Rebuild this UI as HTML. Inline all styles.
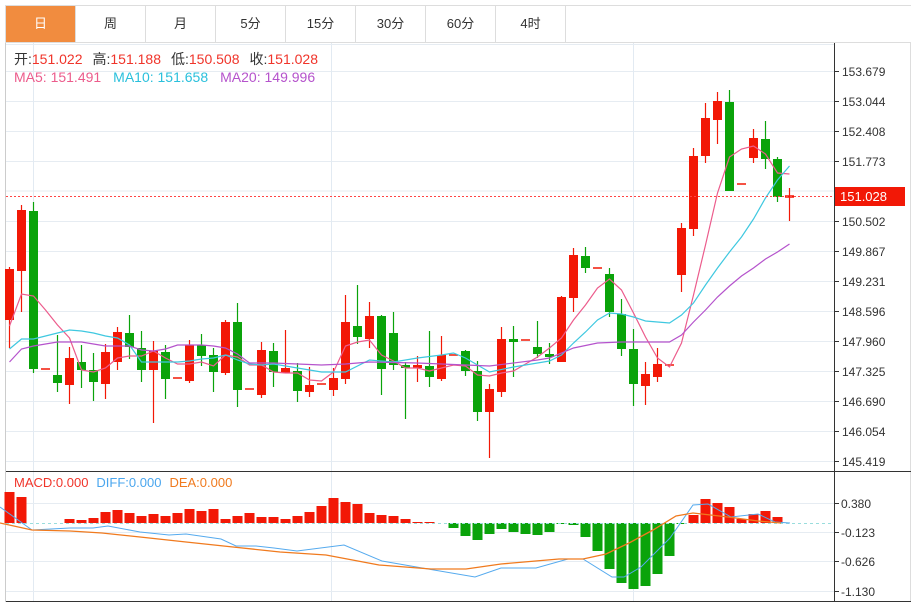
<!DOCTYPE html>
<html><head><meta charset="utf-8"><style>
body{margin:0;background:#fff;width:911px;height:604px;overflow:hidden;font-family:"Liberation Sans","Noto Sans CJK SC",sans-serif;}
.tabs{position:absolute;left:5px;top:5px;height:38px;display:flex;border:1px solid #ddd;border-right:none;box-sizing:border-box;width:906px}
.tab{width:70px;height:36px;line-height:36px;text-align:center;font-size:13px;color:#333;border-right:1px solid #ddd;box-sizing:border-box}
.tab.on{background:#f18c3f;color:#fff}
svg{position:absolute;left:0;top:0}
</style></head><body>
<div class="tabs"><div class="tab on">日</div><div class="tab">周</div><div class="tab">月</div><div class="tab">5分</div><div class="tab">15分</div><div class="tab">30分</div><div class="tab">60分</div><div class="tab">4时</div></div>
<svg id="s" width="911" height="604" style="top:0" xmlns="http://www.w3.org/2000/svg" font-family="Liberation Sans, Noto Sans CJK SC, sans-serif"></svg>
<script>
var s=document.getElementById('s'),h='';
function L(x1,y1,x2,y2,c,w,d){h+='<line x1="'+x1+'" y1="'+y1+'" x2="'+x2+'" y2="'+y2+'" stroke="'+c+'" stroke-width="'+(w||1)+'"'+(d?' stroke-dasharray="'+d+'"':'')+'/>';}
function T(x,y,t,c,fs){h+='<text x="'+x+'" y="'+y+'" fill="'+c+'" font-size="'+(fs||12)+'">'+t+'</text>';}
L(5.5,43,5.5,602,'#ccc');L(910.5,43,910.5,602,'#ddd');
var labs=[[71,'153.679'],[101,'153.044'],[131,'152.408'],[161,'151.773'],[221,'150.502'],[251,'149.867'],[281,'149.231'],[311,'148.596'],[341,'147.960'],[371,'147.325'],[401,'146.690'],[431,'146.054'],[461,'145.419']];
L(6,191,834,191,'#e6ecf2');
labs.forEach(function(a){L(6,a[0]+.5,834,a[0]+.5,'#e6ecf2');L(834,a[0]+.5,839,a[0]+.5,'#333');T(842,a[0]+5,a[1],'#333',12);});
[33.5,331.5,633.5].forEach(function(x){L(x,43,x,602,'#e2eaf2');});
[[503,'0.380'],[532,'-0.123'],[561,'-0.626'],[591,'-1.130']].forEach(function(a){L(6,a[0]+.5,834,a[0]+.5,'#e6ecf2');L(834,a[0]+.5,839,a[0]+.5,'#333');T(841,a[0]+5,a[1],'#333',12);});
h+='<rect x="6" y="44" width="828" height="1" fill="#e6ecf2"/>';
var C=[[269,320,267,348],[210,271,205,312],[211,369,202,373,1],[369,369,369,369],[375,383,335,392,1],[358,385,347,404],[362,370,345,388,1],[370,382,353,401,1],[352,384,344,399],[332,362,327,370],[333,347,315,359,1],[348,370,331,382,1],[351,370,341,423],[352,379,345,399,1],[378,378,378,378],[345,381,340,383],[345,356,334,366,1],[355,372,348,392,1],[322,373,320,375],[322,390,303,407,1],[389,389,389,389],[350,395,342,398],[351,372,343,387,1],[368,373,330,373],[371,391,363,402,1],[385,392,367,397],[384,384,384,384],[378,390,368,396],[322,379,295,384],[326,337,285,344,1],[316,339,302,348],[316,369,315,395,1],[333,365,312,370,1],[365,368,362,419,1],[365,368,356,382],[366,377,331,387,1],[355,379,336,381],[355,355,355,355],[351,371,350,376,1],[371,412,361,421,1],[389,412,384,458],[339,392,327,397],[339,342,326,377,1],[340,340,340,340],[347,354,321,358,1],[354,357,343,364,1],[297,362,296,362],[255,298,248,312],[256,268,247,273,1],[268,268,268,268],[274,312,268,317,1],[314,349,299,356,1],[349,384,329,406,1],[374,386,362,405],[364,377,348,382],[365,365,365,365],[228,275,223,292],[156,229,148,236],[118,156,103,163],[101,120,92,144],[102,191,90,191,1],[184,184,184,184],[138,158,129,163],[139,159,121,169,1],[159,197,157,202,1],[196,197,188,221]];
C.forEach(function(c,i){var x=9.5+12*i,col=c[4]?'#0aa30a':'#f21806';
 L(x,c[2],x,c[3],col,1.2);var t=Math.min(c[0],c[1]),b=Math.max(c[0],c[1]);if(b-t<1.5){t-=.75;b+=.75}
 h+='<rect x="'+(x-4.5)+'" y="'+t+'" width="9" height="'+(b-t)+'" fill="'+col+'"/>';});
function P(pts,c,w){h+='<polyline fill="none" stroke="'+c+'" stroke-width="'+(w||1.2)+'" points="'+pts+'"/>';}
P('9.5,326 21.5,294 33.5,296 45.5,310 57.5,325 69.5,338 81.5,370 93.5,372 105.5,368 117.5,358 129.5,356 141.5,356 153.5,351 165.5,358 177.5,364 189.5,364 201.5,362 213.5,366 225.5,355 237.5,357 249.5,365 261.5,365 273.5,372 285.5,373 297.5,373 309.5,380 321.5,381 333.5,372 345.5,346 357.5,342 369.5,340 381.5,355 393.5,361 405.5,368 417.5,368 429.5,371 441.5,368 453.5,365 465.5,366 477.5,375 489.5,376 501.5,373 513.5,371 525.5,364 537.5,357 549.5,348 561.5,338 573.5,320 585.5,305 597.5,288 609.5,279 621.5,290 633.5,313 645.5,337 657.5,358 669.5,367 681.5,343 693.5,295 705.5,245 717.5,193 729.5,157 741.5,149 753.5,146 765.5,154 777.5,173 789.5,174','#ec5c8c');
P('9.5,349 21.5,339 33.5,339 45.5,336 57.5,333 69.5,330 81.5,331 93.5,333 105.5,336 117.5,338 129.5,345 141.5,362 153.5,362 165.5,362 177.5,362 189.5,361 201.5,359 213.5,358 225.5,355 237.5,360 249.5,364 261.5,365 273.5,364 297.5,368 321.5,372 345.5,372 369.5,360 393.5,362 417.5,358 441.5,355 453.5,353 465.5,358 489.5,372 513.5,367 537.5,363 549.5,361 561.5,355 573.5,343 585.5,332 597.5,320 609.5,313 621.5,314 633.5,317 645.5,321 657.5,322 669.5,323 681.5,315 693.5,303 705.5,285 717.5,268 729.5,252 741.5,237 753.5,219 765.5,198 777.5,180 789.5,166','#3fc8e0');
P('9.5,362 21.5,349 33.5,346 45.5,344 57.5,342 69.5,342 81.5,342 93.5,344 105.5,346 117.5,346 129.5,346 141.5,350 153.5,351 165.5,349 177.5,345 189.5,345 201.5,345 213.5,346 225.5,348 237.5,354 249.5,363 261.5,363 273.5,363 321.5,365 345.5,364 369.5,362 417.5,363 465.5,365 489.5,366 537.5,360 549.5,358 573.5,348 597.5,343 621.5,342 645.5,342 669.5,342 681.5,335 693.5,322 705.5,310 717.5,297 729.5,286 741.5,276 753.5,268 765.5,259 777.5,252 789.5,244','#b553cc');
L(6,196.5,832,196.5,'#f44','1','2,2');
h+='<rect x="834" y="187" width="71" height="19" fill="#f21806"/>';T(840,201,'151.028','#fff',13);
L(834.5,43,834.5,602,'#333');L(6,471.5,911,471.5,'#333');L(6,601.5,911,601.5,'#333');
var M=[492,497,523,523,523,519,520,518,512,510,513,516,514,516,513,509,511,509,519,516,513,517,517,519,516,512,506,498,502,504,513,515,516,519,522,522,523,528,536,540,534,529,532,534,535,532,524,525,537,551,569,583,589,586,574,556,524,515,499,503,507,519,514,511,517,523];
M.forEach(function(v,i){var x=9.5+12*i,z=523;if(Math.abs(v-z)<1)return;var col=v<z?'#f21806':'#0aa30a';
 h+='<rect x="'+(x-5)+'" y="'+Math.min(v,z)+'" width="10" height="'+Math.abs(v-z)+'" fill="'+col+'"/>';});
L(6,523.5,834,523.5,'#9dd','1','3,3');
P('0,507 32,530 70,528 93,528 108,526 140,532 169,535 186,534 221,539 236,546 256,546 274,548 297,551 344,545 382,561 428,569 475,577 501,568 536,568 568,559 583,559 612,577 624,577 641,567 670,538 693,505 708,504 731,517 758,514 775,522 790,523','#55aaee',1);
P('0,523 32,530 70,531 102,533 140,537 186,542 233,547 280,552 326,555 379,565 431,569 466,569 501,564 559,559 583,559 606,554 629,543 653,530 676,516 693,513 728,517 758,521 781,523','#f07a1e',1.3);
h+='<text x="14" y="64" font-size="14"><tspan fill="#333">开:</tspan><tspan fill="#f0342a">151.022</tspan><tspan fill="#333" dx="10">高:</tspan><tspan fill="#f0342a">151.188</tspan><tspan fill="#333" dx="10">低:</tspan><tspan fill="#f0342a">150.508</tspan><tspan fill="#333" dx="10">收:</tspan><tspan fill="#f0342a">151.028</tspan></text>';
h+='<text x="14" y="82" font-size="14"><tspan fill="#ec5c8c">MA5: 151.491</tspan><tspan fill="#2ac0dc" dx="12">MA10: 151.658</tspan><tspan fill="#b553cc" dx="12">MA20: 149.996</tspan></text>';
h+='<text x="14" y="487" font-size="13"><tspan fill="#f0342a">MACD:0.000</tspan><tspan fill="#4aa6ee" dx="8">DIFF:0.000</tspan><tspan fill="#f07a1e" dx="8">DEA:0.000</tspan></text>';
s.innerHTML=h;
</script>
</body></html>
